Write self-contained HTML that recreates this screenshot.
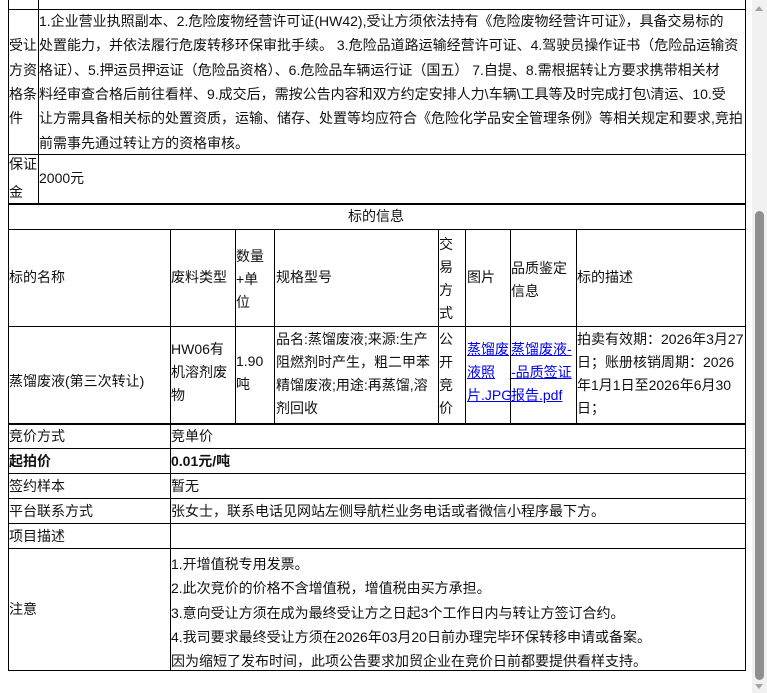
<!DOCTYPE html>
<html><head><meta charset="utf-8"><style>
*{margin:0;padding:0;box-sizing:border-box}
body{width:767px;height:693px;overflow:hidden;background:#fff;position:relative;font-family:"Liberation Sans","Noto Sans CJK SC",sans-serif;font-size:14px;color:#111}
.h{position:absolute;height:1px;background:#000}
.v{position:absolute;width:1px;background:#000}
.t{position:absolute;white-space:nowrap;line-height:16px}
a{color:#00e;text-decoration:underline}
b{font-weight:bold}
</style></head><body>
<div class="v" style="left:8px;top:0;height:424px"></div>
<div class="v" style="left:38px;top:0;height:204px"></div>
<div class="v" style="left:745px;top:0;height:424px"></div>
<div class="h" style="left:8px;top:9px;width:738px"></div>
<div class="h" style="left:8px;top:154px;width:738px"></div>
<div class="h" style="left:8px;top:203px;width:738px;height:2px"></div>
<div class="h" style="left:8px;top:229px;width:738px"></div>
<div class="h" style="left:8px;top:326px;width:738px"></div>

<div class="t" style="left:9px;top:37px">受让</div>
<div class="t" style="left:9px;top:62px">方资</div>
<div class="t" style="left:9px;top:86px">格条</div>
<div class="t" style="left:9px;top:110px">件</div>
<div class="t" style="left:39px;top:13px">1.企业营业执照副本、2.危险废物经营许可证(HW42),受让方须依法持有《危险废物经营许可证》，具备交易标的</div>
<div class="t" style="left:39px;top:37px">处置能力，并依法履行危废转移环保审批手续。 3.危险品道路运输经营许可证、4.驾驶员操作证书（危险品运输资</div>
<div class="t" style="left:39px;top:62px">格证）、5.押运员押运证（危险品资格）、6.危险品车辆运行证（国五） 7.自提、8.需根据转让方要求携带相关材</div>
<div class="t" style="left:39px;top:86px">料经审查合格后前往看样、9.成交后，需按公告内容和双方约定安排人力\车辆\工具等及时完成打包\清运、10.受</div>
<div class="t" style="left:39px;top:110px">让方需具备相关标的处置资质，运输、储存、处置等均应符合《危险化学品安全管理条例》等相关规定和要求,竞拍</div>
<div class="t" style="left:39px;top:135px">前需事先通过转让方的资格审核。</div>

<div class="t" style="left:9px;top:156px">保证</div>
<div class="t" style="left:39px;top:170px">2000元</div>
<div class="t" style="left:9px;top:184px">金</div>

<div class="t" style="left:348px;top:208px">标的信息</div>

<div class="v" style="left:170px;top:229px;height:195px"></div>
<div class="v" style="left:235px;top:229px;height:195px"></div>
<div class="v" style="left:274px;top:229px;height:195px"></div>
<div class="v" style="left:438px;top:229px;height:195px"></div>
<div class="v" style="left:465px;top:229px;height:195px"></div>
<div class="v" style="left:510px;top:229px;height:195px"></div>
<div class="v" style="left:576px;top:229px;height:195px"></div>

<div class="t" style="left:9px;top:269px">标的名称</div>
<div class="t" style="left:171px;top:269px">废料类型</div>
<div class="t" style="left:236px;top:245px;line-height:23px">数量<br>+单<br>位</div>
<div class="t" style="left:276px;top:269px">规格型号</div>
<div class="t" style="left:439px;top:233px;line-height:23px">交<br>易<br>方<br>式</div>
<div class="t" style="left:467px;top:269px">图片</div>
<div class="t" style="left:511px;top:257px;line-height:23px">品质鉴定<br>信息</div>
<div class="t" style="left:577px;top:269px">标的描述</div>

<div class="t" style="left:9px;top:373px">蒸馏废液(第三次转让)</div>
<div class="t" style="left:171px;top:338px;line-height:23px">HW06有<br>机溶剂废<br>物</div>
<div class="t" style="left:236px;top:350px;line-height:23px">1.90<br>吨</div>
<div class="t" style="left:276px;top:328px;line-height:23px">品名:蒸馏废液;来源:生产<br>阻燃剂时产生，粗二甲苯<br>精馏废液;用途:再蒸馏,溶<br>剂回收</div>
<div class="t" style="left:439px;top:328px;line-height:23px">公<br>开<br>竞<br>价</div>
<div class="t" style="left:467px;top:338px;line-height:23px"><a>蒸馏废<br>液照<br>片.JPG</a></div>
<div class="t" style="left:511px;top:338px;line-height:23px"><a>蒸馏废液-<br>-品质签证<br>报告.pdf</a></div>
<div class="t" style="left:577px;top:328px;line-height:23px">拍卖有效期：2026年3月27<br>日；账册核销周期：2026<br>年1月1日至2026年6月30<br>日；</div>

<div class="h" style="left:8px;top:423px;width:738px;height:2px"></div>
<div class="v" style="left:8px;top:423px;height:248px"></div>
<div class="v" style="left:170px;top:423px;height:248px"></div>
<div class="v" style="left:745px;top:423px;height:248px"></div>
<div class="h" style="left:8px;top:448px;width:738px"></div>
<div class="h" style="left:8px;top:473px;width:738px"></div>
<div class="h" style="left:8px;top:498px;width:738px"></div>
<div class="h" style="left:8px;top:523px;width:738px"></div>
<div class="h" style="left:8px;top:548px;width:738px"></div>
<div class="h" style="left:8px;top:670px;width:738px"></div>

<div class="t" style="left:9px;top:428px">竞价方式</div><div class="t" style="left:171px;top:428px">竞单价</div>
<div class="t" style="left:9px;top:453px"><b>起拍价</b></div><div class="t" style="left:171px;top:453px"><b>0.01元/吨</b></div>
<div class="t" style="left:9px;top:478px">签约样本</div><div class="t" style="left:171px;top:478px">暂无</div>
<div class="t" style="left:9px;top:503px">平台联系方式</div><div class="t" style="left:171px;top:503px">张女士，联系电话见网站左侧导航栏业务电话或者微信小程序最下方。</div>
<div class="t" style="left:9px;top:528px">项目描述</div>
<div class="t" style="left:9px;top:601px">注意</div>
<div class="t" style="left:171px;top:552px;line-height:24.3px">1.开增值税专用发票。<br>2.此次竞价的价格不含增值税，增值税由买方承担。<br>3.意向受让方须在成为最终受让方之日起3个工作日内与转让方签订合约。<br>4.我司要求最终受让方须在2026年03月20日前办理完毕环保转移申请或备案。<br>因为缩短了发布时间，此项公告要求加贸企业在竞价日前都要提供看样支持。</div>

<div style="position:absolute;left:752px;top:0;width:15px;height:693px;background:#f1f1f1"></div>
<div style="position:absolute;left:755px;top:6px;width:0;height:0;border-left:4px solid transparent;border-right:4px solid transparent;border-bottom:5px solid #a3a3a3"></div>
<div style="position:absolute;left:755px;top:211px;width:9px;height:469px;background:#8f8f8f;border-radius:5px"></div>
<div style="position:absolute;left:755px;top:684px;width:0;height:0;border-left:4px solid transparent;border-right:4px solid transparent;border-top:5px solid #a3a3a3"></div>
</body></html>
